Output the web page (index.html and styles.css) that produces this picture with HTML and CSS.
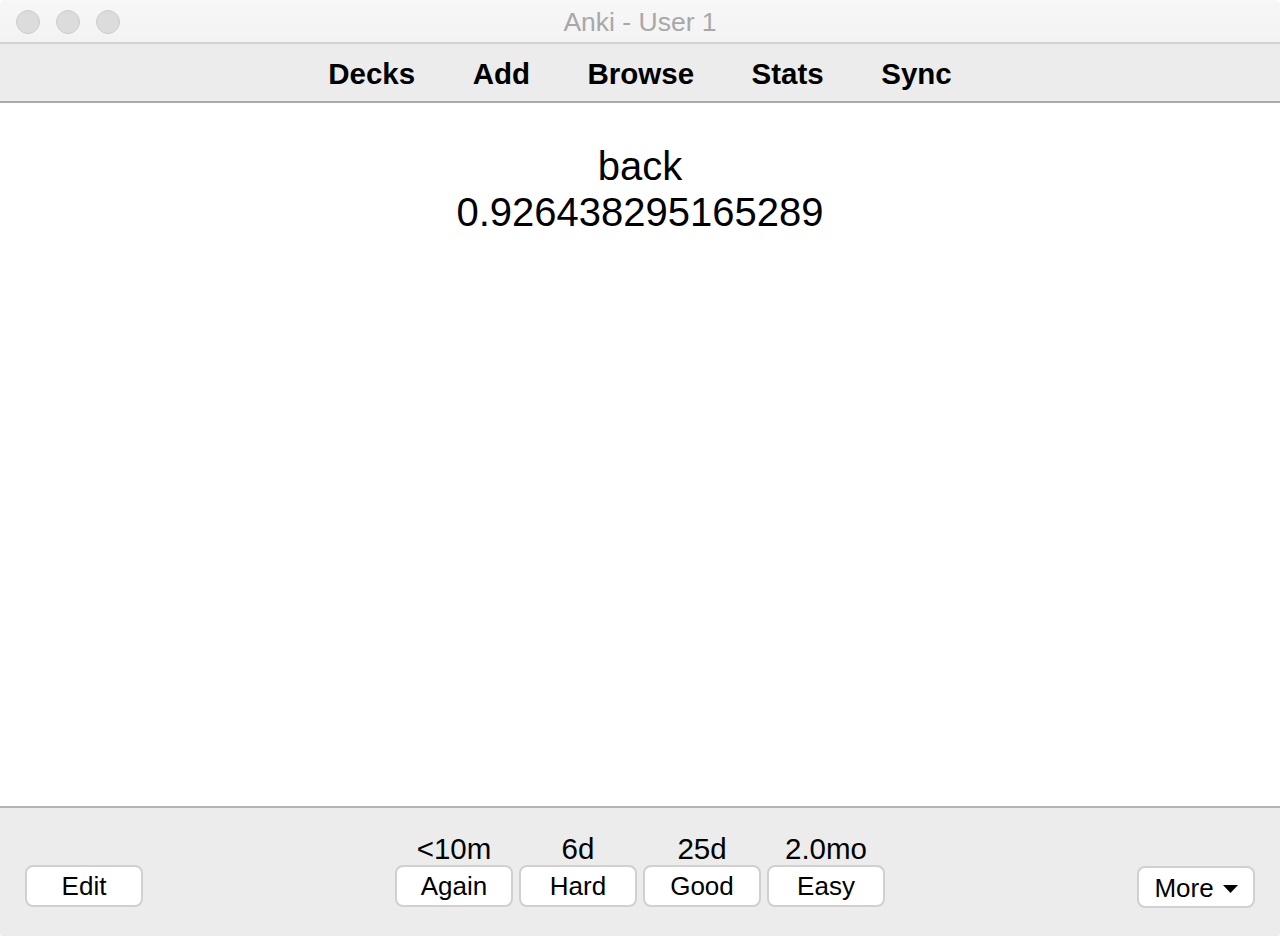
FILE: index.html
```html
<!DOCTYPE html>
<html>
<head>
<meta charset="utf-8">
<title>Anki - User 1</title>
<link rel="stylesheet" href="styles.css">
</head>
<body>
<div class="window">
  <div class="titlebar">
    <div class="lights">
      <span class="light"></span>
      <span class="light"></span>
      <span class="light"></span>
    </div>
    <div class="title">Anki - User 1</div>
    <div></div>
  </div>
  <div class="toolbar">
    <span class="tool">Decks</span>
    <span class="tool">Add</span>
    <span class="tool">Browse</span>
    <span class="tool">Stats</span>
    <span class="tool">Sync</span>
  </div>
  <div class="content">
    <div class="card">back<br>0.926438295165289</div>
  </div>
  <div class="bottombar">
    <div class="left">
      <button class="btn">Edit</button>
    </div>
    <div class="answers">
      <div class="answer">
        <div class="ival">&lt;10m</div>
        <button class="btn">Again</button>
      </div>
      <div class="answer">
        <div class="ival">6d</div>
        <button class="btn">Hard</button>
      </div>
      <div class="answer">
        <div class="ival">25d</div>
        <button class="btn">Good</button>
      </div>
      <div class="answer">
        <div class="ival">2.0mo</div>
        <button class="btn">Easy</button>
      </div>
    </div>
    <div class="right">
      <button class="btn more">More <svg class="caret" width="15" height="8" viewBox="0 0 15 8"><path d="M0 0 H15 L7.5 8 Z" fill="#000"/></svg></button>
    </div>
  </div>
</div>
</body>
</html>
```

FILE: styles.css
```css
html, body {
  margin: 0;
  padding: 0;
  background: #ffffff;
}

body {
  font-family: "Liberation Sans", Arial, sans-serif;
  color: #000;
}

.window {
  width: 1280px;
  height: 936px;
  display: flex;
  flex-direction: column;
  border-radius: 5px 5px 2px 2px;
  overflow: hidden;
  box-sizing: border-box;
}

.titlebar {
  height: 44px;
  flex: none;
  box-sizing: border-box;
  background: linear-gradient(#f7f7f7, #f3f3f3);
  border-bottom: 2px solid #d3d3d3;
  display: grid;
  grid-template-columns: 1fr auto 1fr;
  align-items: center;
}

.lights {
  display: flex;
  gap: 16px;
  padding-left: 16px;
  padding-top: 2px;
}

.light {
  width: 24px;
  height: 24px;
  box-sizing: border-box;
  border-radius: 50%;
  background: #dcdcdc;
  border: 1px solid #cdcdcd;
}

.title {
  font-size: 26.5px;
  color: #a8a8a8;
  line-height: 30px;
  padding-top: 2px;
}

.toolbar {
  height: 59px;
  flex: none;
  box-sizing: border-box;
  background: #ececec;
  border-bottom: 2px solid #aaaaaa;
  display: flex;
  justify-content: center;
  align-items: center;
  gap: 57.5px;
  padding-top: 3px;
}

.tool {
  font-weight: bold;
  font-size: 29.5px;
  line-height: 34px;
}

.content {
  flex: 1;
  background: #ffffff;
  padding-top: 40px;
  text-align: center;
}

.card {
  font-size: 40px;
  line-height: 46px;
}

.bottombar {
  height: 130px;
  flex: none;
  box-sizing: border-box;
  background: #ececec;
  border-top: 2px solid #b3b3b3;
  display: grid;
  grid-template-columns: 1fr auto 1fr;
  align-items: end;
  padding: 0 25px 29px 25px;
}

.left {
  justify-self: start;
}

.right {
  justify-self: end;
}

.answers {
  display: flex;
  gap: 6px;
}

.answer {
  display: flex;
  flex-direction: column;
  align-items: center;
}

.ival {
  font-size: 29.5px;
  line-height: 30px;
  margin-bottom: 1px;
}

.btn {
  width: 118px;
  height: 42px;
  box-sizing: border-box;
  background: #ffffff;
  border: 2px solid #d0d0d0;
  border-radius: 8px;
  font-family: "Liberation Sans", Arial, sans-serif;
  font-size: 26px;
  color: #000;
  padding: 0;
  display: flex;
  align-items: center;
  justify-content: center;
}

.more {
  gap: 9px;
  margin-bottom: -1px;
  padding-top: 2px;
}

.caret {
  display: block;
  margin-top: 1px;
}
```
